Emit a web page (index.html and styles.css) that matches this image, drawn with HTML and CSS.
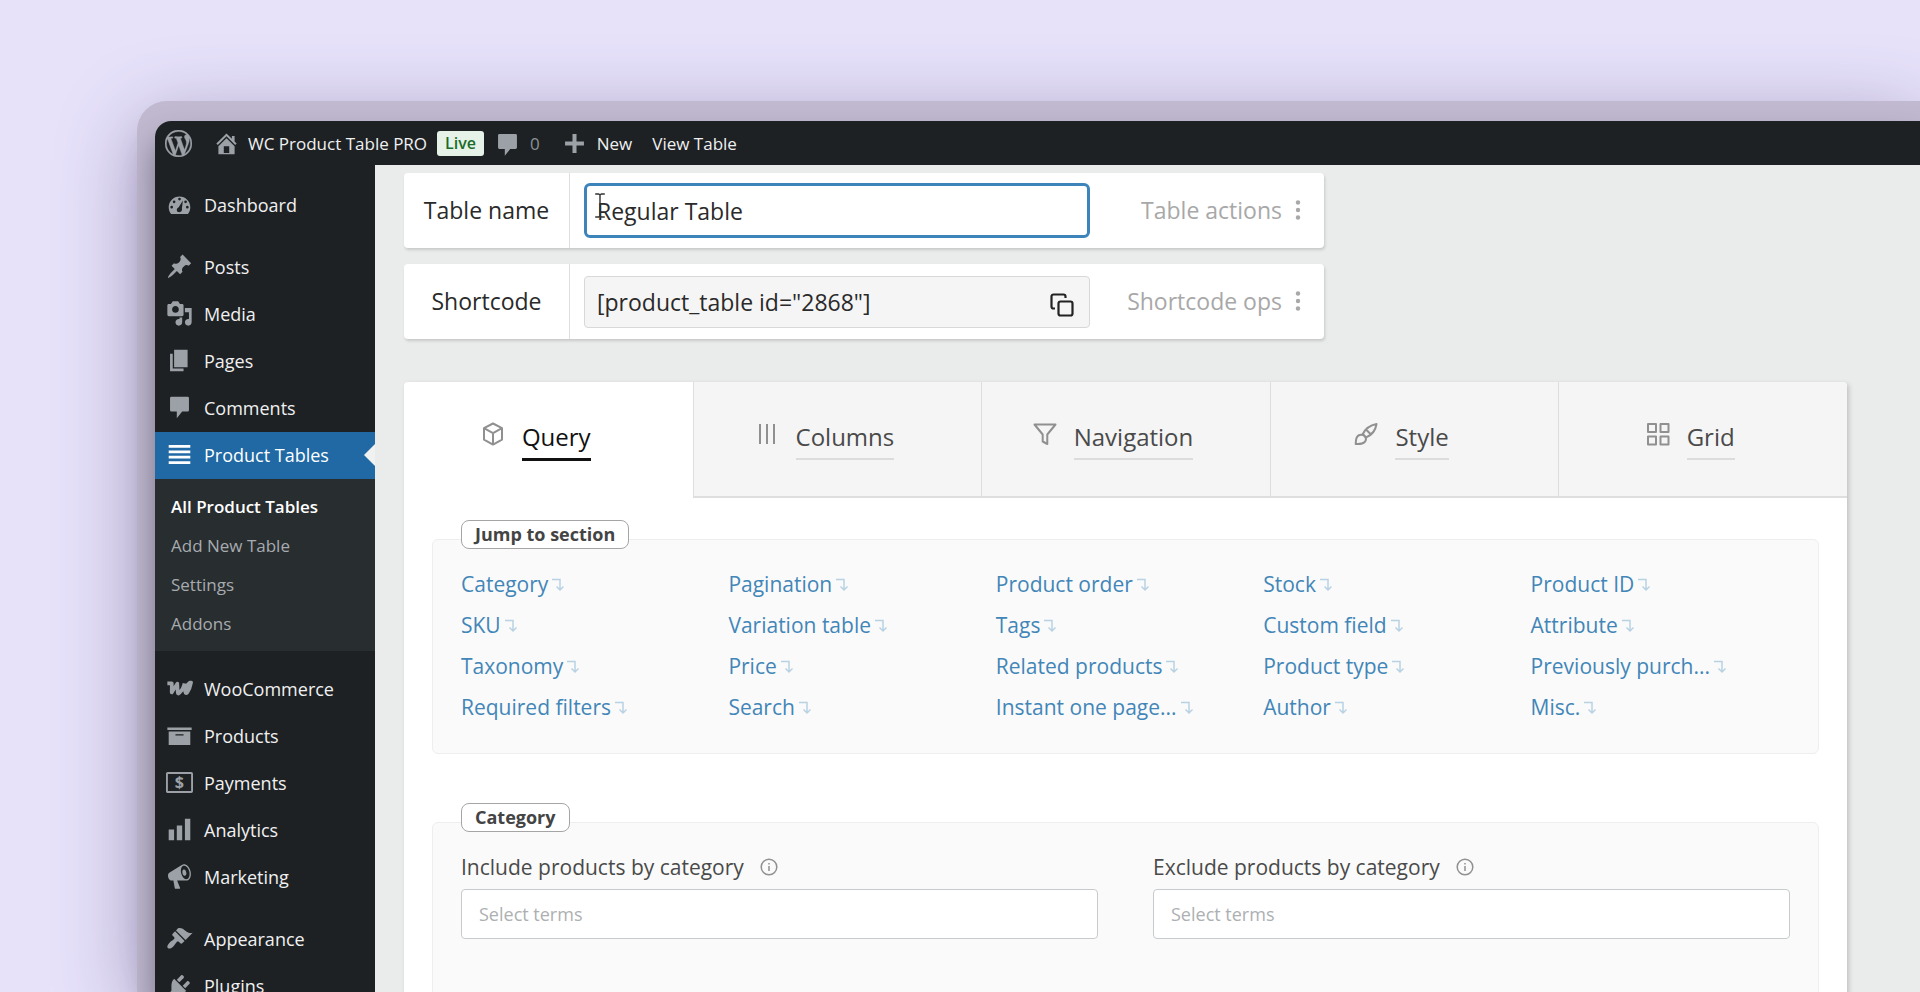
FILE: index.html
```html
<!DOCTYPE html>
<html lang="en">
<head>
  <meta charset="UTF-8">
  <title>WC Product Table PRO</title>
  <link rel="stylesheet" href="styles.css">
</head>
<body>

<div class="frame">
<div class="window">

  <!-- Admin bar -->
  <header class="adminbar">
    <a href="#" class="wp-logo" aria-label="WordPress">
      <svg class="icon" viewBox="0 0 20 20"><path stroke="currentColor" stroke-width="0.3" d="M20 10c0-5.51-4.49-10-10-10C4.48 0 0 4.49 0 10c0 5.52 4.48 10 10 10 5.51 0 10-4.48 10-10zM7.78 15.37L4.37 6.22c.55-.02 1.17-.08 1.17-.08.5-.06.44-1.13-.06-1.11 0 0-1.45.11-2.37.11-.18 0-.37 0-.58-.01C4.12 2.69 6.87 1.11 10 1.11c2.33 0 4.45.87 6.05 2.34-.68-.11-1.65.39-1.65 1.58 0 .74.45 1.36.9 2.1.35.61.55 1.36.55 2.46 0 1.49-1.4 5-1.4 5l-3.03-8.37c.54-.02.82-.17.82-.17.5-.05.44-1.25-.06-1.22 0 0-1.44.12-2.38.12-.87 0-2.33-.12-2.33-.12-.5-.03-.56 1.2-.06 1.22l.92.08 1.26 3.41zM17.41 10c.24-.64.74-1.87.43-4.25.7 1.29 1.05 2.71 1.05 4.25 0 3.29-1.73 6.24-4.4 7.78.97-2.59 1.94-5.2 2.92-7.78zM6.1 18.09C3.12 16.65 1.11 13.53 1.11 10c0-1.3.23-2.48.72-3.59C3.25 10.3 4.67 14.2 6.1 18.09zm4.03-6.63l2.58 6.98c-.86.29-1.76.45-2.71.45-.79 0-1.57-.11-2.29-.33.81-2.38 1.62-4.74 2.42-7.1z"/></svg>
    </a>
    <a href="#" class="site-name">
      <svg class="icon" viewBox="0 0 20 20"><path d="M16 8.5l1.53 1.53-1.06 1.06L10 4.6l-6.47 6.49-1.06-1.06L10 2.5l4 4v-2h2v4zm-6-2.46l6 5.99V18H4v-5.97zM12 17v-5H8v5h4z"/></svg>
      WC Product Table PRO
    </a>
    <span class="live">Live</span>
    <a href="#" class="bar-comments">
      <svg class="icon" viewBox="0 0 20 20"><path d="M4 3h12a1 1 0 0 1 1 1v9a1 1 0 0 1-1 1h-4l-4 5v-5H4a1 1 0 0 1-1-1V4a1 1 0 0 1 1-1z"/></svg>
      0
    </a>
    <a href="#" class="bar-new">
      <svg class="icon" viewBox="0 0 20 20"><path d="M17 8.5v3h-5.500V17h-3v-5.500H3v-3h5.500V3h3v5.500z"/></svg>
      New
    </a>
    <a href="#">View Table</a>
  </header>

  <div class="main">
    <!-- Side menu -->
    <nav class="sidebar">
      <a href="#" class="item">
        <svg class="icon" viewBox="0 0 20 20"><path fill-rule="evenodd" d="M3.760 17h12.480c1.100-1.380 1.760-3.110 1.760-5 0-4.410-3.580-8-8-8s-8 3.590-8 8c0 1.890.660 3.620 1.760 5zM9 6a1 1 0 1 1 2 0 1 1 0 0 1-2 0zM5 8a1 1 0 1 1 2 0 1 1 0 0 1-2 0zM3.200 12a1 1 0 1 1 2 0 1 1 0 0 1-2 0zM14.800 12a1 1 0 1 1 2 0 1 1 0 0 1-2 0zM8 14c0-1 .7-1.600 1.400-1.900L12.500 7l-.7 5.800c.4 1.600-.5 2.900-1.800 2.900S8 15 8 14zM13.500 8a1 1 0 1 1 2 0 1 1 0 0 1-2 0z"/></svg>
        Dashboard
      </a>

      <a href="#" class="item group">
        <svg class="icon" viewBox="0 0 20 20"><path d="M10.440 3.020l1.820-1.820 6.360 6.350-1.830 1.820c-1.050-.68-2.480-.57-3.410.36l-.75.75c-.92.93-1.040 2.350-.35 3.410l-1.830 1.820-2.410-2.410-2.800 2.790c-.42.42-3.380 2.710-3.800 2.290s1.860-3.390 2.280-3.810l2.790-2.790L4.100 9.360l1.830-1.820c1.050.69 2.480.57 3.400-.36l.75-.75c.93-.92 1.050-2.350.36-3.410z"/></svg>
        Posts
      </a>
      <a href="#" class="item">
        <svg class="icon" viewBox="0 0 20 20"><path d="M13 11V4c0-.55-.45-1-1-1h-1.670L9 1H5L3.670 3H2c-.55 0-1 .45-1 1v7c0 .55.45 1 1 1h10c.55 0 1-.45 1-1zM7 4.500c1.380 0 2.500 1.120 2.500 2.500S8.380 9.500 7 9.500 4.500 8.380 4.500 7 5.620 4.500 7 4.500zM14 6h5v10.500c0 1.380-1.120 2.500-2.500 2.500S14 17.880 14 16.500s1.120-2.500 2.500-2.500c.17 0 .34.02.5.05V9h-3V6zm-4 8.050V13h2v3.500c0 1.380-1.120 2.500-2.500 2.500S7 17.880 7 16.500 8.120 14 9.500 14c.17 0 .34.02.5.05z"/></svg>
        Media
      </a>
      <a href="#" class="item">
        <svg class="icon" viewBox="0 0 20 20"><path d="M6 15V2h10v13H6zm-1 1h8v2H3V5h2v11z"/></svg>
        Pages
      </a>
      <a href="#" class="item">
        <svg class="icon" viewBox="0 0 20 20"><path d="M4 2h12a1 1 0 0 1 1 1v9a1 1 0 0 1-1 1h-4l-4 5v-5H4a1 1 0 0 1-1-1V3a1 1 0 0 1 1-1z"/></svg>
        Comments
      </a>
      <a href="#" class="item current">
        <svg class="icon" viewBox="0 0 20 20"><path d="M2 3h16v2H2zM2 7h16v2H2zM2 11h16v2H2zM2 15h16v2H2z"/></svg>
        Product Tables
      </a>
      <div class="submenu">
        <a href="#" class="active">All Product Tables</a>
        <a href="#">Add New Table</a>
        <a href="#">Settings</a>
        <a href="#">Addons</a>
      </div>

      <a href="#" class="item group">
        <svg class="icon" viewBox="0 0 20 20"><path d="M1 6.200h3.300l-.1 6.800 4.200-6.600.3 6.800q.1 1 1 .2 3.300-3 4-7.200M17.600 5.600q-3.600 3-3.400 6.600.3 2.200 1.600.6 2-2.600 2.800-7.200z" fill="none" stroke="currentColor" stroke-width="2.700" stroke-linejoin="round"/></svg>
        WooCommerce
      </a>
      <a href="#" class="item">
        <svg class="icon" viewBox="0 0 20 20"><path d="M19 4v2H1V4h18zM2 7h16v10H2V7zm11 3V9H7v1h6z"/></svg>
        Products
      </a>
      <a href="#" class="item">
        <svg class="icon" viewBox="0 0 20 20"><rect x="0.700" y="3" width="18.600" height="14" rx="0.600" fill="none" stroke="currentColor" stroke-width="1.400"/><text x="10" y="14.300" class="dollar">$</text></svg>
        Payments
      </a>
      <a href="#" class="item">
        <svg class="icon" viewBox="0 0 20 20"><path d="M18 18V2h-4v16h4zm-6 0V7H8v11h4zm-6 0v-8H2v8h4z"/></svg>
        Analytics
      </a>
      <a href="#" class="item">
        <svg class="icon" viewBox="0 0 20 20"><path d="M18.150 5.940c.46 1.620.38 3.220-.02 4.480-.42 1.280-1.260 2.180-2.300 2.480-.16.06-.26.06-.4.06-.06.02-.12.02-.18.02-.06.02-.14.02-.22.02h-6.800l2.220 5.500c.02.14-.06.26-.14.34-.08.1-.24.16-.34.16H6.950c-.1 0-.26-.06-.34-.16-.08-.08-.16-.2-.14-.34l-1-5.500H4.250l-.02-.02c-.5.06-1.080-.18-1.540-.62s-.88-1.080-1.060-1.880c-.24-.8-.2-1.560-.02-2.200.18-.62.58-1.080 1.060-1.300l.02-.02 9-5.400c.1-.06.18-.1.24-.16.06-.04.14-.08.24-.12.16-.08.28-.12.5-.18 1.040-.3 2.240.1 3.220.98s1.840 2.240 2.260 3.860zm-2.580 5.980h-.02c.4-.1.74-.34 1.040-.7.58-.7.86-1.760.86-3.040 0-.64-.1-1.300-.28-1.980-.34-1.360-1.020-2.500-1.780-3.240s-1.680-1.100-2.460-.88c-.82.22-1.400.96-1.700 2-.32 1.040-.28 2.360.06 3.720.38 1.360 1 2.500 1.800 3.240.78.74 1.620 1.100 2.480.88zm-2.540-7.080c.22-.04.42-.02.62.04.38.16.76.48 1.020 1s.42 1.200.42 1.780c0 .3-.04.56-.12.8-.18.48-.44.84-.86.94-.34.1-.8-.06-1.140-.4s-.64-.86-.78-1.500c-.18-.62-.12-1.240.02-1.720s.48-.84.82-.94z"/></svg>
        Marketing
      </a>

      <a href="#" class="item group">
        <svg class="icon" viewBox="0 0 20 20"><path d="M14.480 11.060L7.410 3.990l1.500-1.500c.5-.56 2.300-.47 3.510.32 1.210.8 1.430 1.280 2.910 2.100 1.180.64 2.450 1.260 4.450.85zm-.71.71L6.700 4.700 4.930 6.470c-.39.39-.39 1.020 0 1.410l1.060 1.060c.39.39.39 1.030 0 1.420-.6.6-1.430 1.110-2.210 1.690-.35.26-.7.53-1.010.84C1.430 14.230.4 16.080 1.400 17.070c.99 1 2.840-.03 4.180-1.360.31-.31.58-.66.85-1.020.57-.78 1.080-1.610 1.690-2.210.39-.39 1.020-.39 1.410 0l1.060 1.060c.39.39 1.020.39 1.410 0z"/></svg>
        Appearance
      </a>
      <a href="#" class="item">
        <svg class="icon" viewBox="0 0 20 20"><path d="M13.110 4.360L9.870 7.600 8 5.730l3.240-3.240c.35-.34 1.050-.2 1.560.32.52.51.66 1.210.31 1.550zm-8 1.770l.91-1.120 9.010 9.010-1.190.84c-.71.71-2.630 1.160-3.820 1.160H6.140L4.900 17.260c-.59.59-1.540.59-2.120 0-.59-.58-.59-1.530 0-2.120l1.240-1.240v-3.880c0-1.130.4-3.190 1.090-3.890zm7.260 3.970l3.240-3.240c.34-.35 1.040-.21 1.550.31.52.51.66 1.210.31 1.550l-3.240 3.250z"/></svg>
        Plugins
      </a>
    </nav>

    <!-- Table editor -->
    <main class="content">
      <div class="row-card">
        <label for="tableName">Table name</label>
        <div class="field">
          <input type="text" id="tableName" class="focused" value="Regular Table">
          <svg class="ibeam" viewBox="0 0 12 26"><path d="M1 1h3.500L6 2l1.500-1H11M6 2v22M1 25h3.500L6 24l1.500 1H11"/></svg>
        </div>
        <button type="button" class="more">Table actions <svg viewBox="0 0 6 20"><circle cx="3" cy="2.500" r="2.200"/><circle cx="3" cy="10" r="2.200"/><circle cx="3" cy="17.500" r="2.200"/></svg></button>
      </div>

      <div class="row-card">
        <label for="shortcode">Shortcode</label>
        <div class="field">
          <input type="text" id="shortcode" value="[product_table id=&quot;2868&quot;]" readonly>
          <button type="button" class="copy" aria-label="Copy">
            <svg viewBox="0 0 24 24"><path d="M5 15.500H3.500a2 2 0 0 1-2-2V3.500a2 2 0 0 1 2-2H13.500a2 2 0 0 1 2 2V5"/><rect x="8.500" y="8.500" width="14" height="14" rx="2"/></svg>
          </button>
        </div>
        <button type="button" class="more">Shortcode ops <svg viewBox="0 0 6 20"><circle cx="3" cy="2.500" r="2.200"/><circle cx="3" cy="10" r="2.200"/><circle cx="3" cy="17.500" r="2.200"/></svg></button>
      </div>

      <div class="panel">
        <div class="tabs">
          <button type="button" class="tab selected">
            <svg viewBox="0 0 24 24"><path d="M12 1.500l9 4.700v11.400l-9 5-9-5V6.200zM3 6.200l9 5 9-5M12 11.200v11.400"/></svg>
            <span>Query</span>
          </button>
          <button type="button" class="tab">
            <svg viewBox="0 0 24 24"><path d="M5 2v20M12 2v20M19 2v20"/></svg>
            <span>Columns</span>
          </button>
          <button type="button" class="tab">
            <svg viewBox="0 0 24 24"><path d="M1.500 2.500h21l-8.200 10v9.500l-4.600-2.500v-7z"/></svg>
            <span>Navigation</span>
          </button>
          <button type="button" class="tab">
            <svg viewBox="0 0 24 24"><path d="M22.500 2C15 3.500 10.500 8.500 8.800 12l3.400 3.400C16.500 13.500 21.500 9 22.500 2zM12.500 8l4 4M10.500 14c2 2 1.500 4.500.2 6-1.700 1.800-5.200 2.300-9 2 .3-2.500-.3-5.500 1.800-7.700 1.500-1.600 5-2.300 7-.3z"/></svg>
            <span>Style</span>
          </button>
          <button type="button" class="tab">
            <svg viewBox="0 0 24 24"><path d="M2 2h8v8H2zM14.500 2h8v8h-8zM2 14.500h8v8H2zM14.500 14.500h8v8h-8z"/></svg>
            <span>Grid</span>
          </button>
        </div>

        <section class="section">
          <h2>Jump to section</h2>
          <div class="jump" id="jump"></div>
        </section>

        <section class="section">
          <h2>Category</h2>
          <div class="terms">
            <div>
              <label for="include">Include products by category
                <svg viewBox="0 0 18 18"><circle cx="9" cy="9" r="7.800"/><path d="M9 8v5M9 5v1.500"/></svg></label>
              <input type="text" id="include" placeholder="Select terms">
            </div>
            <div>
              <label for="exclude">Exclude products by category
                <svg viewBox="0 0 18 18"><circle cx="9" cy="9" r="7.800"/><path d="M9 8v5M9 5v1.500"/></svg></label>
              <input type="text" id="exclude" placeholder="Select terms">
            </div>
          </div>
        </section>
      </div>
    </main>
  </div>

</div>
</div>

<script>
  const sections = [
    'Category', 'Pagination', 'Product order', 'Stock', 'Product ID',
    'SKU', 'Variation table', 'Tags', 'Custom field', 'Attribute',
    'Taxonomy', 'Price', 'Related products', 'Product type', 'Previously purch...',
    'Required filters', 'Search', 'Instant one page...', 'Author', 'Misc.'
  ];

  document.getElementById('jump').innerHTML = sections.map(name => `
    <a href="#">${name}<svg viewBox="0 0 12 14"><path d="M0 1.500h8V11M4.500 8.500L8 12l3.500-3.500"/></svg></a>
  `).join('');
</script>
</body>
</html>
```

FILE: styles.css
```css
* {
  box-sizing: border-box;
}

body {
  margin: 0;
  height: 100vh;
  overflow: hidden;
  padding: 101px 0 0 137px;
  background: #e7e2fa;
  font-family: "Open Sans", "Noto Sans", sans-serif;
  font-size: 18px;
  color: #2c3338;
}

a {
  color: inherit;
  text-decoration: none;
}

h2 {
  margin: 0;
}

button, input {
  font-family: inherit;
}

svg {
  flex: none;
}

/* window frame */
.frame {
  height: 100%;
  padding: 20px 0 0 18px;
  border-radius: 30px 0 0 0;
  background: #c0b9cf;
  box-shadow: 0 20px 80px rgba(60, 45, 100, 0.4);
}

.window {
  height: 100%;
  display: flex;
  flex-direction: column;
  overflow: hidden;
  border-radius: 16px 0 0 0;
  background: #eaeceb;
  box-shadow: 0 20px 30px rgba(50, 45, 70, 0.5);
}

/* admin bar */
.adminbar {
  flex: none;
  display: flex;
  align-items: center;
  height: 44px;
  padding-left: 10px;
  background: #1d2123;
  color: #f0f0f1;
  font-size: 17px;
}

.adminbar a {
  display: flex;
  align-items: center;
}

.icon {
  width: 27px;
  height: 27px;
  fill: currentColor;
  color: #9ca1a7;
}

.site-name {
  margin-left: 21px;
  gap: 8px;
}

.live {
  margin: 0 10px;
  padding: 0 8px;
  line-height: 25px;
  border-radius: 3px;
  background: #e6f2e8;
  color: #1a6b2a;
  font-size: 16px;
  font-weight: 600;
}

.bar-comments {
  gap: 9px;
  color: #8c9197;
}

.bar-new {
  margin: 0 20px 0 21px;
  gap: 9px;
}

.main {
  flex: 1;
  display: flex;
  min-height: 0;
}

/* side menu */
.sidebar {
  flex: none;
  width: 220px;
  padding-top: 17px;
  background: #1d2123;
  color: #f0f0f1;
}

.item {
  position: relative;
  display: flex;
  align-items: center;
  gap: 11px;
  height: 47px;
  padding: 0 0 2px 11px;
}

.group {
  margin-top: 15px;
}

.current {
  background: #2069a4;
  color: #fff;
}

.current .icon {
  color: #fff;
}

.current::after {
  content: "";
  position: absolute;
  right: 0;
  top: 12px;
  border: 11px solid transparent;
  border-left: 0;
  border-right-color: #f0f2f1;
}

.submenu {
  padding: 8px 16px;
  background: #282d30;
  color: #a7abaf;
  font-size: 17px;
}

.submenu a {
  display: block;
  line-height: 39px;
}

.submenu .active {
  color: #fff;
  font-weight: 600;
}

.dollar {
  font-size: 12px;
  font-weight: 700;
  text-anchor: middle;
}

/* content */
.content {
  flex: 1;
  padding: 8px 73px 0 29px;
}

.row-card {
  display: flex;
  align-items: center;
  max-width: 920px;
  height: 75px;
  margin-bottom: 16px;
  background: #fff;
  border-radius: 4px;
  box-shadow: 1px 2px 3px rgba(0, 0, 0, 0.15);
  font-size: 23px;
  color: #2a2a2a;
}

.row-card > label {
  width: 166px;
  line-height: 75px;
  text-align: center;
  border-right: 1px solid #dedede;
}

.field {
  position: relative;
  width: 506px;
  margin-left: 14px;
}

.field input {
  display: block;
  width: 100%;
  height: 52px;
  padding: 0 12px;
  border: 1px solid #d8d8d8;
  border-radius: 4px;
  background: #f5f5f5;
  color: #2a2a2a;
  font-size: 23px;
  outline: none;
}

.field .focused {
  height: 55px;
  padding: 0 10px;
  border: 3px solid #3d84ba;
  border-radius: 6px;
  background: #fff;
}

.ibeam {
  position: absolute;
  left: 10px;
  top: 10px;
  width: 12px;
  height: 25px;
  fill: none;
  stroke: #333;
  stroke-width: 1.5;
}

.copy {
  position: absolute;
  right: 16px;
  top: 17px;
  padding: 0;
  border: 0;
  background: none;
  cursor: pointer;
}

.copy svg {
  display: block;
  width: 24px;
  height: 24px;
  fill: none;
  stroke: #222;
  stroke-width: 2.2;
}

.more {
  display: flex;
  align-items: center;
  gap: 13px;
  margin-left: auto;
  padding: 0 23px 2px 0;
  border: 0;
  background: none;
  color: #a8a8a8;
  font-size: 23px;
  cursor: pointer;
}

.more svg {
  width: 6px;
  height: 20px;
  fill: currentColor;
}

.panel {
  margin-top: 43px;
  height: 700px;
  background: #fff;
  border-radius: 4px;
  box-shadow: 2px 2px 5px rgba(0, 0, 0, 0.18);
}

/* tabs */
.tabs {
  display: flex;
}

.tab {
  flex: 1;
  display: flex;
  justify-content: center;
  align-items: flex-start;
  gap: 17px;
  height: 116px;
  padding: 38px 26px 0 0;
  border: solid #dedede;
  border-width: 0 0 2px 1px;
  background: #f5f5f5;
  color: #4a4a4a;
  font-size: 24px;
  line-height: 34px;
  cursor: pointer;
}

.tab:last-child {
  border-radius: 0 4px 0 0;
}

.tab svg {
  width: 24px;
  height: 24px;
  margin-top: 2px;
  fill: none;
  stroke: #909090;
  stroke-width: 2;
  stroke-linejoin: round;
}

.tab span {
  padding-bottom: 4px;
  border-bottom: 2px solid #dcdcdc;
}

.selected {
  border-color: transparent;
  background: none;
  color: #111;
}

.selected span {
  border-bottom: 3px solid #111;
}

/* sections */
.section {
  margin: 41px 28px 68px;
  padding: 0 28px;
  border: 1px solid #eeeeee;
  border-radius: 6px;
  background: #fafafa;
}

.section h2 {
  width: fit-content;
  margin-top: -20px;
  padding: 0 13px;
  border: 1px solid #a5a5a5;
  border-radius: 8px;
  background: #fff;
  color: #444;
  font-size: 18px;
  font-weight: 700;
  line-height: 27px;
}

.jump {
  display: grid;
  grid-template-columns: repeat(5, 1fr);
  margin-right: -8px;
  padding: 15px 0 25px;
  color: #4286b8;
  font-size: 21px;
  line-height: 41px;
}

.jump svg {
  width: 12px;
  height: 14px;
  margin-left: 4px;
  fill: none;
  stroke: #b9d2e3;
  stroke-width: 1.5;
}

.terms {
  display: grid;
  grid-template-columns: 1fr 1fr;
  gap: 55px;
  height: 300px;
  padding-top: 19px;
}

.terms label {
  display: flex;
  align-items: center;
  gap: 16px;
  color: #4a4a4a;
  font-size: 21px;
  line-height: 32px;
}

.terms label svg {
  width: 18px;
  height: 18px;
  fill: none;
  stroke: #909090;
  stroke-width: 1.5;
}

.terms input {
  width: 100%;
  height: 50px;
  margin-top: 6px;
  padding: 0 17px;
  border: 1px solid #c8cbcd;
  border-radius: 4px;
  background: #fff;
  font-size: 18px;
}

.terms input::placeholder {
  color: #adb0b2;
}
```
